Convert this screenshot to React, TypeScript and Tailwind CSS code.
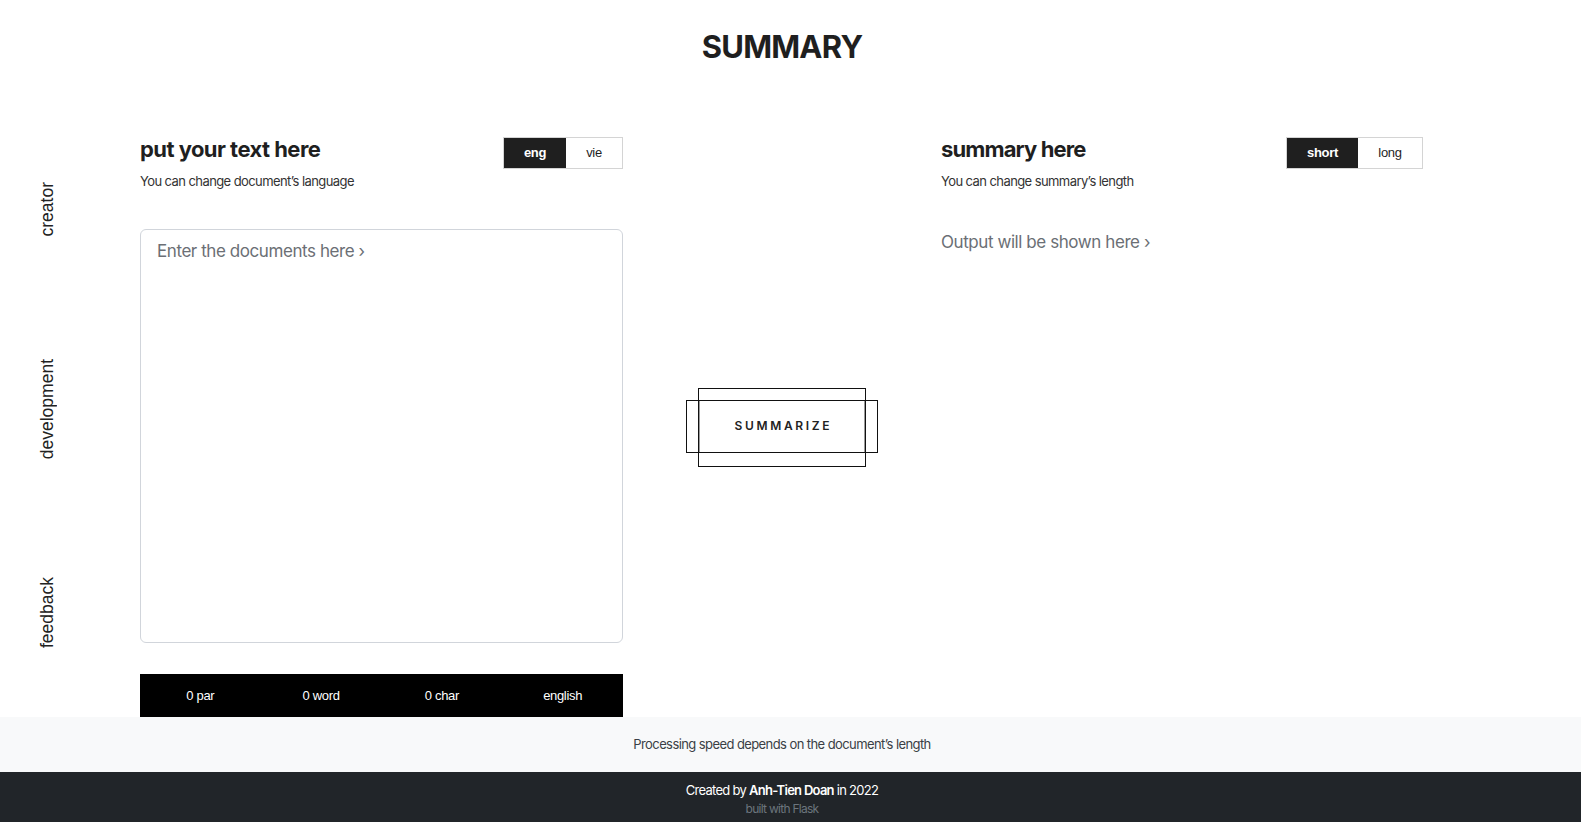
import { useState } from 'react';

const stats = ['0 par', '0 word', '0 char', 'english'];

const Toggle = ({ options, active, widths }: { options: string[]; active: number; widths: string[] }) => (
  <div className="mt-[2px] flex h-[32px] border border-[#d4d4d4] font-['Liberation_Sans',sans-serif] text-[13px] tracking-tight">
    {options.map((o, i) => (
      <button
        key={o}
        className={`${widths[i]} flex items-center justify-center ${
          i === active ? 'bg-[#1f1f1f] font-semibold text-white' : 'bg-white text-[#1f1f1f]'
        }`}
      >
        {o}
      </button>
    ))}
  </div>
);

export default function App() {
  const [text, setText] = useState('');

  return (
    <div className="min-h-screen bg-white font-['Inter',sans-serif] text-[#1f1f1f]">
      <div className="w-[1564px]">
        <h1 className="pt-[29px] text-center text-[31px] font-bold leading-[36px] tracking-tight">SUMMARY</h1>

        <div className="mt-[70px] flex">
          {/* side nav */}
          <div className="flex w-[140px] flex-col pl-[37px] font-['Liberation_Sans',sans-serif] text-[17.5px] leading-[20px] text-[#222]">
            <a className="mt-[47px] rotate-180 [writing-mode:vertical-rl]">creator</a>
            <a className="mt-[123px] rotate-180 [writing-mode:vertical-rl]">development</a>
            <a className="mt-[117px] rotate-180 [writing-mode:vertical-rl]">feedback</a>
          </div>

          {/* input column */}
          <div className="flex w-[483px] flex-col">
            <div className="flex items-start justify-between">
              <h2 className="text-[22px] font-bold leading-[28px] tracking-tight">put your text here</h2>
              <Toggle options={['eng', 'vie']} active={0} widths={['w-[62px]', 'w-[56px]']} />
            </div>
            <p className="mt-[3px] text-[13px] leading-[18px] tracking-[-0.045em] text-[#333]">
              You can change document’s language
            </p>
            <textarea
              value={text}
              onChange={(e) => setText(e.target.value)}
              placeholder="Enter the documents here ›"
              className="mt-[39px] h-[414px] resize-none rounded-md border border-[#d1d5db] px-4 pt-[9px] text-[17px] leading-[24px] tracking-tight outline-none placeholder:text-[#6b6f75]"
            />
            <div className="mt-[31px] grid h-[43px] grid-cols-4 items-center bg-black text-center font-['Liberation_Sans',sans-serif] text-[13px] tracking-tight text-white">
              {stats.map((s) => (
                <span key={s}>{s}</span>
              ))}
            </div>
          </div>

          {/* action */}
          <div className="flex w-[318px] items-center justify-center">
            <button className="relative h-[53px] w-[166px] border border-[#9a9a9a] bg-white text-[12px] font-semibold tracking-[0.22em] text-[#222]">
              <span className="pointer-events-none absolute -top-[13px] -bottom-[15px] -left-[2px] -right-[2px] border border-[#111]" />
              <span className="pointer-events-none absolute -top-[1px] -bottom-[1px] -left-[14px] -right-[14px] border border-[#111]" />
              <span className="relative pl-[0.22em]">SUMMARIZE</span>
            </button>
          </div>

          {/* output column */}
          <div className="flex w-[482px] flex-col">
            <div className="flex items-start justify-between">
              <h2 className="text-[22px] font-bold leading-[28px] tracking-[-0.04em]">summary here</h2>
              <Toggle options={['short', 'long']} active={0} widths={['w-[71px]', 'w-[64px]']} />
            </div>
            <p className="mt-[3px] text-[13px] leading-[18px] tracking-[-0.045em] text-[#333]">
              You can change summary’s length
            </p>
            <p className="mt-[40px] text-[17px] leading-[24px] tracking-tight text-[#6b6f75]">Output will be shown here ›</p>
          </div>
        </div>
      </div>

      <div className="bg-[#f8f9fa]">
        <p className="w-[1564px] py-[18px] text-center text-[13px] leading-[19px] tracking-[-0.045em] text-[#3a3f45]">
          Processing speed depends on the document’s length
        </p>
      </div>
      <footer className="h-[50px] bg-[#212529]">
        <div className="w-[1564px] pt-[9px] text-center tracking-[-0.045em]">
          <p className="text-[13px] leading-[18px] text-white">
            Created by <span className="font-semibold">Anh-Tien Doan</span> in 2022
          </p>
          <p className="mt-[2px] text-[12px] leading-[16px] text-[#6c757d]">built with Flask</p>
        </div>
      </footer>
    </div>
  );
}
